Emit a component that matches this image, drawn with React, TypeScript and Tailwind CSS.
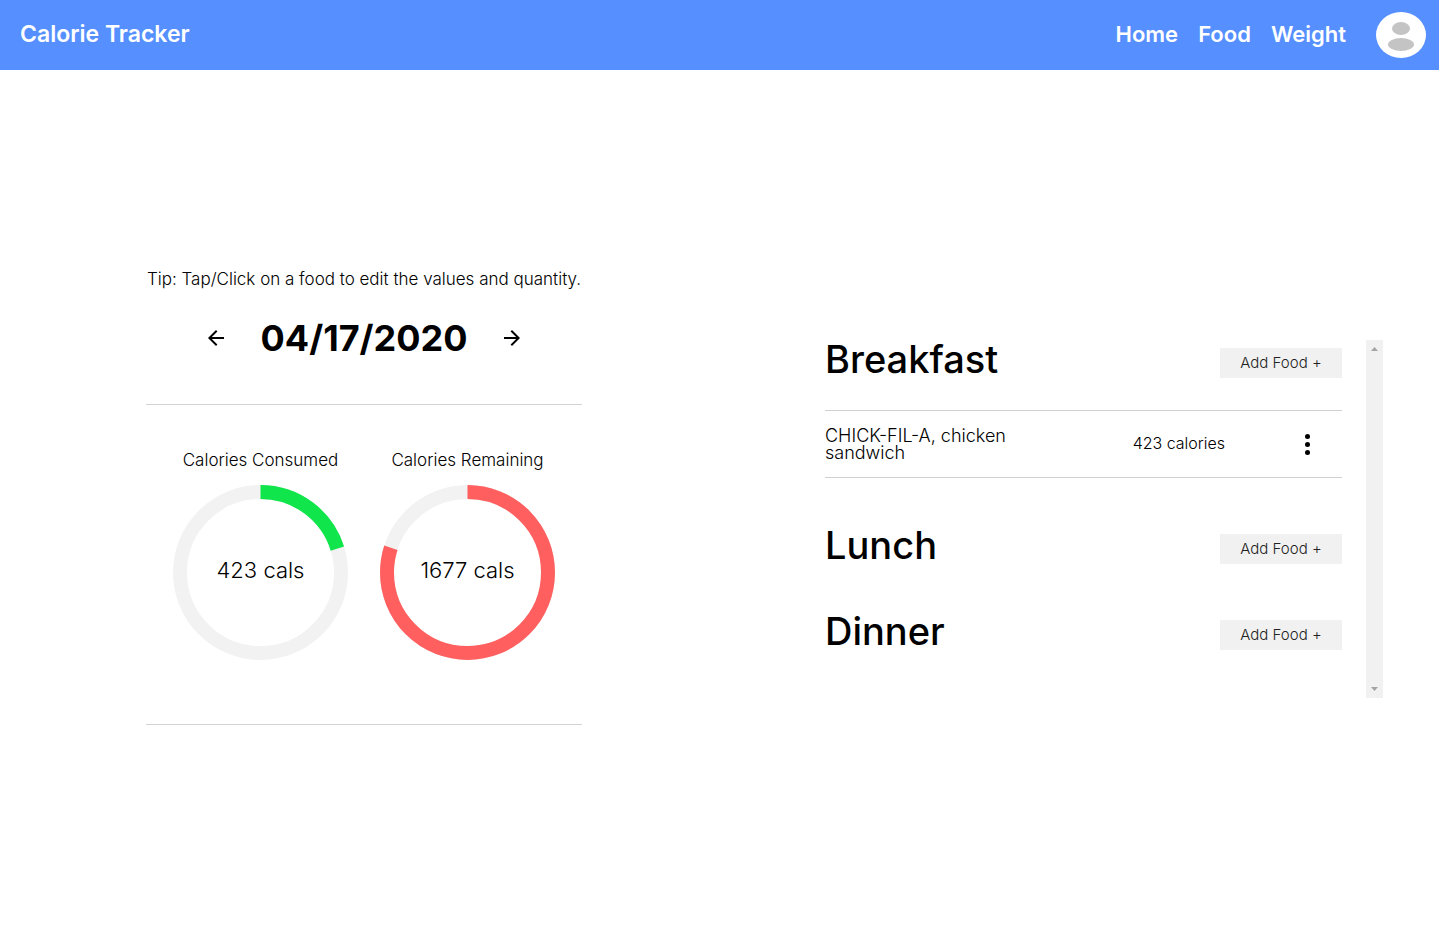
import { MdArrowBack, MdArrowForward } from "react-icons/md";

type Food = { name: string; calories: number };
type Meal = { title: string; foods: Food[] };

const meals: Meal[] = [
  { title: "Breakfast", foods: [{ name: "CHICK-FIL-A, chicken sandwich", calories: 423 }] },
  { title: "Lunch", foods: [] },
  { title: "Dinner", foods: [] },
];

const DAILY_GOAL = 2100;
const consumed = 423;

function Avatar() {
  return (
    <svg width="50" height="46" viewBox="0 0 50 46" aria-hidden="true">
      <ellipse cx="25" cy="23" rx="25" ry="23" fill="#fff" />
      <ellipse cx="25" cy="16.5" rx="9" ry="6.5" fill="#c4c4c4" />
      <ellipse cx="25" cy="32.5" rx="13" ry="6.5" fill="#c4c4c4" />
    </svg>
  );
}

function MoreIcon() {
  return (
    <svg width="32" height="32" viewBox="0 0 32 32" aria-hidden="true">
      <circle cx="16.5" cy="8.5" r="2.5" />
      <circle cx="16.5" cy="16.5" r="2.5" />
      <circle cx="16.5" cy="24.5" r="2.5" />
    </svg>
  );
}

function Header() {
  return (
    <header className="flex h-[70px] items-center justify-between bg-[#568fff] pr-[13px] pl-5 font-semibold text-white">
      <a href="#" className="pb-0.5 text-[23px] leading-7">
        Calorie Tracker
      </a>
      <div className="flex items-center gap-[30px]">
        <nav className="flex gap-5 pb-0.5 text-[22px] leading-7">
          <a href="#home">Home</a>
          <a href="#food">Food</a>
          <a href="#weight">Weight</a>
        </nav>
        <button type="button" aria-label="Account">
          <Avatar />
        </button>
      </div>
    </header>
  );
}

function Ring({ label, value, color }: { label: string; value: number; color: string }) {
  const radius = 80.5;
  const length = 2 * Math.PI * radius;
  return (
    <div className="flex w-[175px] flex-col items-center">
      <h2 className="mb-[14px] text-[17px] leading-[22px] whitespace-nowrap">{label}</h2>
      <div className="grid place-items-center">
        <svg className="col-start-1 row-start-1" width="175" height="175" viewBox="0 0 175 175" aria-hidden="true">
          <circle cx="87.5" cy="87.5" r={radius} fill="none" stroke="#f2f2f2" strokeWidth="14" />
          <circle
            cx="87.5"
            cy="87.5"
            r={radius}
            fill="none"
            stroke={color}
            strokeWidth="14"
            strokeDasharray={`${(value / DAILY_GOAL) * length} ${length}`}
            transform="rotate(-90 87.5 87.5)"
          />
        </svg>
        <p className="col-start-1 row-start-1 pb-1.5 text-[22px] leading-7">{value} cals</p>
      </div>
    </div>
  );
}

function Summary() {
  return (
    <section className="w-[436px] shrink-0">
      <p className="text-center text-[17px] leading-[22px] whitespace-nowrap">
        Tip: Tap/Click on a food to edit the values and quantity.
      </p>
      <div className="mt-[26px] flex items-center justify-center gap-[33px]">
        <button type="button" aria-label="Previous day">
          <MdArrowBack size={24} />
        </button>
        <h1 className="text-[36px] leading-11 font-bold">04/17/2020</h1>
        <button type="button" aria-label="Next day">
          <MdArrowForward size={24} />
        </button>
      </div>
      <div className="mt-11 flex justify-center gap-8 border-y border-[#d3d3d3] pt-11 pb-16">
        <Ring label="Calories Consumed" value={consumed} color="#10e54b" />
        <Ring label="Calories Remaining" value={DAILY_GOAL - consumed} color="#ff5f5f" />
      </div>
    </section>
  );
}

function MealSection({ title, foods }: Meal) {
  return (
    <section className="pb-4">
      <div className="mb-6 flex h-[46px] items-center justify-between">
        <h2 className="pb-2 text-[38px] leading-10 font-medium">{title}</h2>
        <button type="button" className="h-[30px] w-[122px] bg-[#f1f1f1] text-[15px] text-[#222]">
          Add Food +
        </button>
      </div>
      {foods.length > 0 && (
        <ul className="mb-8 border-t border-[#d3cfcf]">
          {foods.map((food) => (
            <li key={food.name} className="flex h-[67px] items-center border-b border-[#d3cfcf]">
              <button type="button" className="w-[210px] text-left text-[18px] leading-[17px]">
                {food.name}
              </button>
              <span className="ml-auto pb-0.5 text-[16px] leading-[22px]">{food.calories} calories</span>
              <button type="button" aria-label="Food options" className="mr-[19px] ml-[66px]">
                <MoreIcon />
              </button>
            </li>
          ))}
        </ul>
      )}
    </section>
  );
}

function ScrollTrack() {
  return (
    <div className="flex w-[17px] shrink-0 flex-col items-center justify-between bg-[#f1f1f1] py-[7px]" aria-hidden="true">
      <svg width="7" height="4" viewBox="0 0 7 4">
        <path d="M0 4 L3.5 0 L7 4 Z" fill="#a3a3a3" />
      </svg>
      <svg width="7" height="4" viewBox="0 0 7 4">
        <path d="M0 0 L3.5 4 L7 0 Z" fill="#a3a3a3" />
      </svg>
    </div>
  );
}

export default function App() {
  return (
    <div className="min-h-screen bg-white font-['Inter','Liberation_Sans',sans-serif] font-light text-black">
      <Header />
      <main className="flex items-start justify-between gap-16 pt-[198px] pr-14 pl-[146px]">
        <Summary />
        <div className="mt-[72px] flex max-w-[558px] grow gap-6">
          <div className="grow">
            {meals.map((meal) => (
              <MealSection key={meal.title} {...meal} />
            ))}
          </div>
          <ScrollTrack />
        </div>
      </main>
    </div>
  );
}
